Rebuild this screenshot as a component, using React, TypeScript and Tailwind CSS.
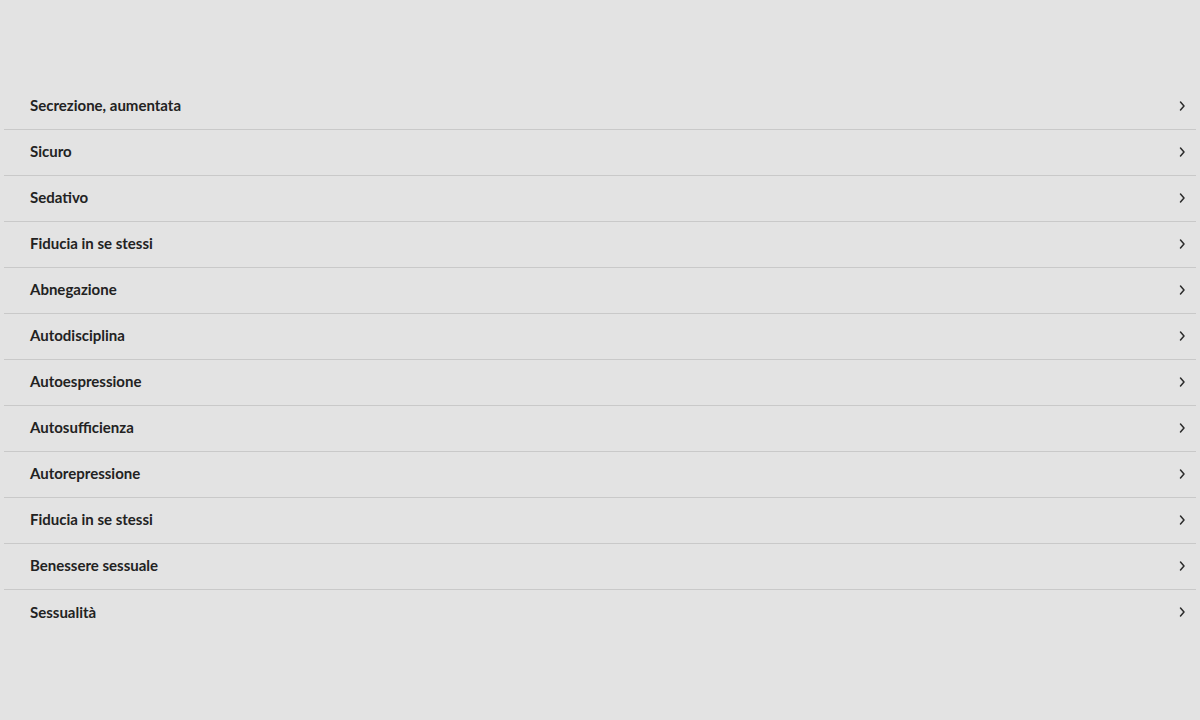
const items = [
  "Secrezione, aumentata",
  "Sicuro",
  "Sedativo",
  "Fiducia in se stessi",
  "Abnegazione",
  "Autodisciplina",
  "Autoespressione",
  "Autosufficienza",
  "Autorepressione",
  "Fiducia in se stessi",
  "Benessere sessuale",
  "Sessualità",
];

function Chevron() {
  return (
    <svg width="8" height="12" viewBox="0 0 8 12" fill="none" className="text-[#2b2b2b]">
      <path d="M2.5 2 6 6 2.5 10" stroke="currentColor" strokeWidth="1.5" strokeLinecap="round" strokeLinejoin="round" />
    </svg>
  );
}

export default function App() {
  return (
    <div className="min-h-[720px] w-full bg-[#e3e3e3] font-['Lato','Liberation_Sans',sans-serif]">
      <ul className="pt-[84px] mx-1 divide-y divide-[#c9c9c9]">
        {items.map((label, i) => (
          <li key={i} className="h-[46px] flex items-center justify-between pl-[26px] pr-[10px] pb-[2px]">
            <span className="text-[15px] font-bold text-[#222]">{label}</span>
            <Chevron />
          </li>
        ))}
      </ul>
    </div>
  );
}
